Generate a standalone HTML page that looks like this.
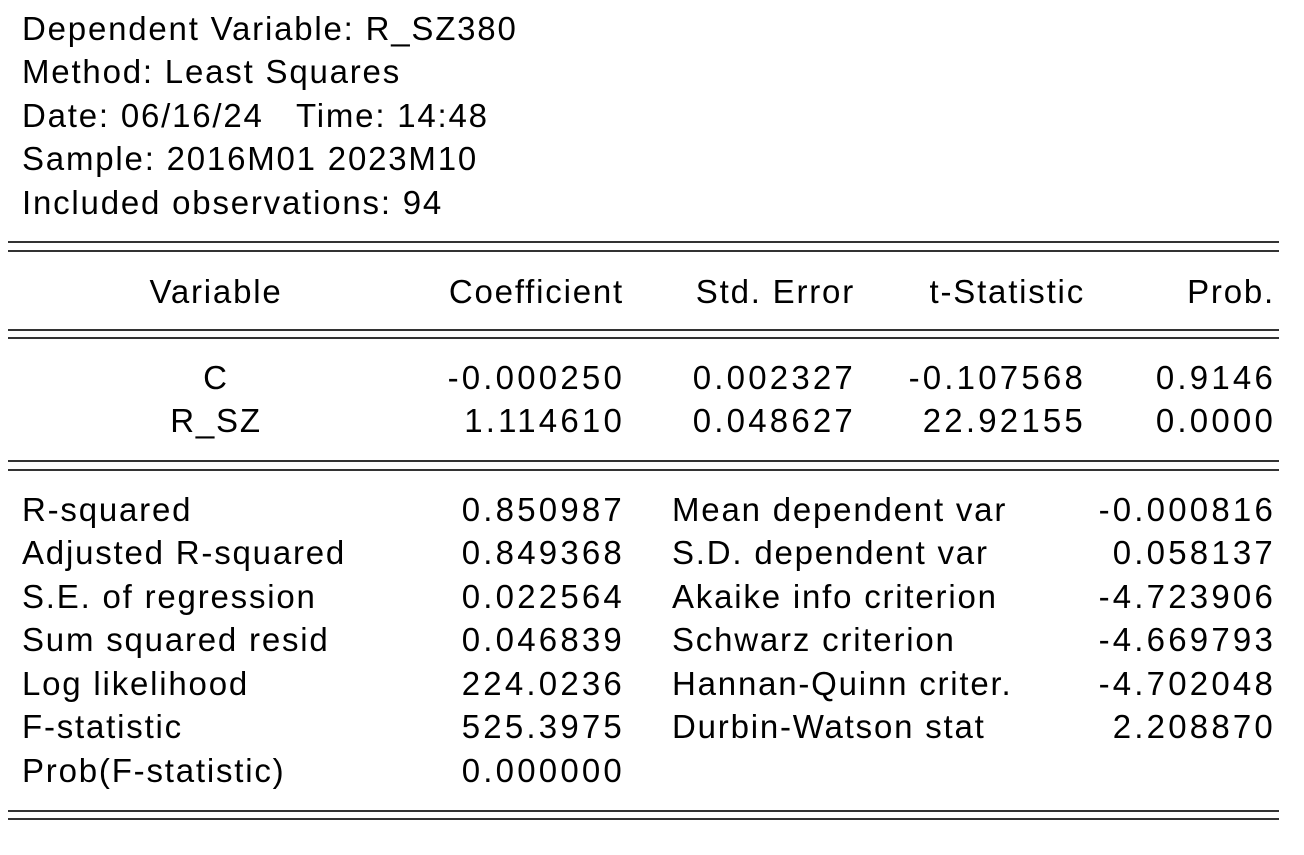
<!DOCTYPE html>
<html><head><meta charset="utf-8"><style>
body{margin:0;width:1304px;height:855px;background:#fff;position:relative;overflow:hidden;font-family:"Liberation Sans",Arial,sans-serif;font-size:33px;letter-spacing:1.8px;color:#000}
.t{position:absolute;line-height:30px;white-space:nowrap}
.l{left:22px}
.r{text-align:right}
.n{letter-spacing:3.2px}
.hl{position:absolute;left:8px;width:1271px;height:2px;background:#333}
</style></head><body>
<div class="t l" style="top:14px">Dependent Variable: R_SZ380</div>
<div class="t l" style="top:57px">Method: Least Squares</div>
<div class="t l" style="top:101px">Date: 06/16/24&nbsp;&nbsp; Time: 14:48</div>
<div class="t l" style="top:144px">Sample: 2016M01 2023M10</div>
<div class="t l" style="top:188px">Included observations: 94</div>

<div class="hl" style="top:241px"></div><div class="hl" style="top:250px"></div>
<div class="t" style="top:277px;left:116px;width:200px;text-align:center">Variable</div>
<div class="t r" style="top:277px;right:680px">Coefficient</div>
<div class="t r" style="top:277px;right:449px">Std. Error</div>
<div class="t r" style="top:277px;right:219px">t-Statistic</div>
<div class="t r" style="top:277px;right:29px">Prob.</div>
<div class="hl" style="top:329px"></div><div class="hl" style="top:337px"></div>

<div class="t" style="top:363px;left:116px;width:200px;text-align:center">C</div>
<div class="t r n" style="top:363px;right:679px">-0.000250</div>
<div class="t r n" style="top:363px;right:448px">0.002327</div>
<div class="t r n" style="top:363px;right:218px">-0.107568</div>
<div class="t r n" style="top:363px;right:28px">0.9146</div>
<div class="t" style="top:406px;left:116px;width:200px;text-align:center">R_SZ</div>
<div class="t r n" style="top:406px;right:679px">1.114610</div>
<div class="t r n" style="top:406px;right:448px">0.048627</div>
<div class="t r n" style="top:406px;right:218px">22.92155</div>
<div class="t r n" style="top:406px;right:28px">0.0000</div>
<div class="hl" style="top:460px"></div><div class="hl" style="top:469px"></div>

<div class="t l" style="top:495px">R-squared</div>
<div class="t l" style="top:538px">Adjusted R-squared</div>
<div class="t l" style="top:582px">S.E. of regression</div>
<div class="t l" style="top:625px">Sum squared resid</div>
<div class="t l" style="top:669px">Log likelihood</div>
<div class="t l" style="top:712px">F-statistic</div>
<div class="t l" style="top:756px">Prob(F-statistic)</div>

<div class="t r n" style="top:495px;right:679px">0.850987</div>
<div class="t r n" style="top:538px;right:679px">0.849368</div>
<div class="t r n" style="top:582px;right:679px">0.022564</div>
<div class="t r n" style="top:625px;right:679px">0.046839</div>
<div class="t r n" style="top:669px;right:679px">224.0236</div>
<div class="t r n" style="top:712px;right:679px">525.3975</div>
<div class="t r n" style="top:756px;right:679px">0.000000</div>

<div class="t" style="top:495px;left:672px">Mean dependent var</div>
<div class="t" style="top:538px;left:672px">S.D. dependent var</div>
<div class="t" style="top:582px;left:672px">Akaike info criterion</div>
<div class="t" style="top:625px;left:672px">Schwarz criterion</div>
<div class="t" style="top:669px;left:672px">Hannan-Quinn criter.</div>
<div class="t" style="top:712px;left:672px">Durbin-Watson stat</div>

<div class="t r n" style="top:495px;right:28px">-0.000816</div>
<div class="t r n" style="top:538px;right:28px">0.058137</div>
<div class="t r n" style="top:582px;right:28px">-4.723906</div>
<div class="t r n" style="top:625px;right:28px">-4.669793</div>
<div class="t r n" style="top:669px;right:28px">-4.702048</div>
<div class="t r n" style="top:712px;right:28px">2.208870</div>
<div class="hl" style="top:810px"></div><div class="hl" style="top:818px"></div>
</body></html>
